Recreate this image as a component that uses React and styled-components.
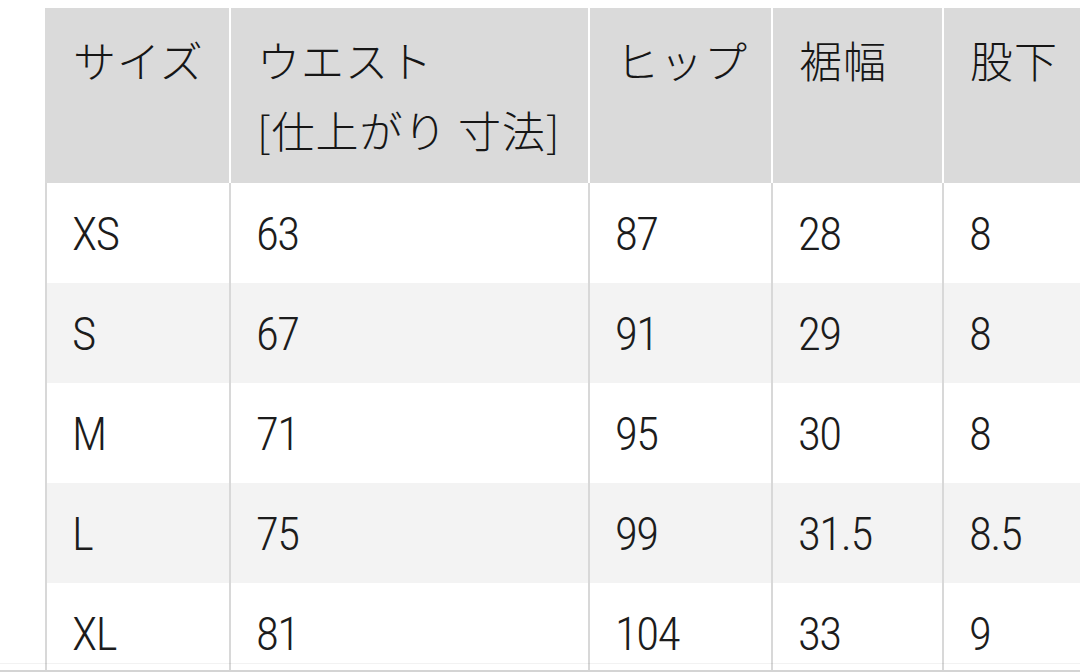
import React from "react";
import styled, { createGlobalStyle } from "styled-components";

const Global = createGlobalStyle`
  html, body { margin: 0; padding: 0; background: #ffffff; overflow: hidden; }
  body { width: 1080px; height: 672px; }
`;

const Page = styled.div`
  position: relative;
  width: 1080px;
  height: 672px;
  overflow: hidden;
  padding: 8px 0 0 45px;
  box-sizing: border-box;
  color: #161616;
`;

const Table = styled.table`
  border-collapse: separate;
  border-spacing: 0;
  table-layout: fixed;
  width: 1115px;
`;

const HeadCell = styled.th`
  box-sizing: border-box;
  width: ${(p) => p.$w}px;
  height: 175px;
  background: #dadada;
  border-left: 2px solid ${(p) => (p.$first ? "#dadada" : "#ffffff")};
  padding: 16px 0 0 26px;
  vertical-align: top;
  text-align: left;
  font-family: "Noto Sans CJK JP", "Noto Sans", sans-serif;
  font-weight: 300;
  font-size: 43px;
  line-height: 70px;
  letter-spacing: 1px;
  white-space: nowrap;
`;

const Row = styled.tr`
  background: ${(p) => (p.$alt ? "#f3f3f3" : "#ffffff")};
`;

const Cell = styled.td`
  box-sizing: border-box;
  height: 100px;
  border-left: 2px solid #d8d8d8;
  padding: 26px 0 0 25px;
  vertical-align: top;
  font-family: "Liberation Sans Narrow", "Roboto Condensed", "Liberation Sans", sans-serif;
  font-weight: 300;
  font-size: 47px;
  line-height: 50px;
  letter-spacing: -1.5px;
  color: #1c1c1c;
  white-space: nowrap;
`;

const BottomEdge = styled.div`
  position: absolute;
  left: 0;
  right: 0;
  bottom: 0;
  height: 8px;
  border-top: 1px solid rgba(0, 0, 0, 0.05);
  &::after {
    content: "";
    position: absolute;
    left: 0;
    right: 0;
    bottom: 0;
    height: 2px;
    background: #d4d4d4;
  }
`;

const columns = [
  { w: 184, label: ["サイズ"] },
  { w: 359, label: ["ウエスト", "[仕上がり 寸法]"] },
  { w: 183, label: ["ヒップ"] },
  { w: 171, label: ["裾幅"] },
  { w: 218, label: ["股下"] },
];

const rows = [
  ["XS", "63", "87", "28", "8"],
  ["S", "67", "91", "29", "8"],
  ["M", "71", "95", "30", "8"],
  ["L", "75", "99", "31.5", "8.5"],
  ["XL", "81", "104", "33", "9"],
];

export default function App() {
  return (
    <>
      <Global />
      <Page>
        <Table>
          <thead>
            <tr>
              {columns.map((c, i) => (
                <HeadCell key={i} $w={c.w} $first={i === 0}>
                  {c.label.map((l, j) => (
                    <div key={j}>{l}</div>
                  ))}
                </HeadCell>
              ))}
            </tr>
          </thead>
          <tbody>
            {rows.map((r, i) => (
              <Row key={i} $alt={i % 2 === 1}>
                {r.map((v, j) => (
                  <Cell key={j}>{v}</Cell>
                ))}
              </Row>
            ))}
          </tbody>
        </Table>
        <BottomEdge />
      </Page>
    </>
  );
}
